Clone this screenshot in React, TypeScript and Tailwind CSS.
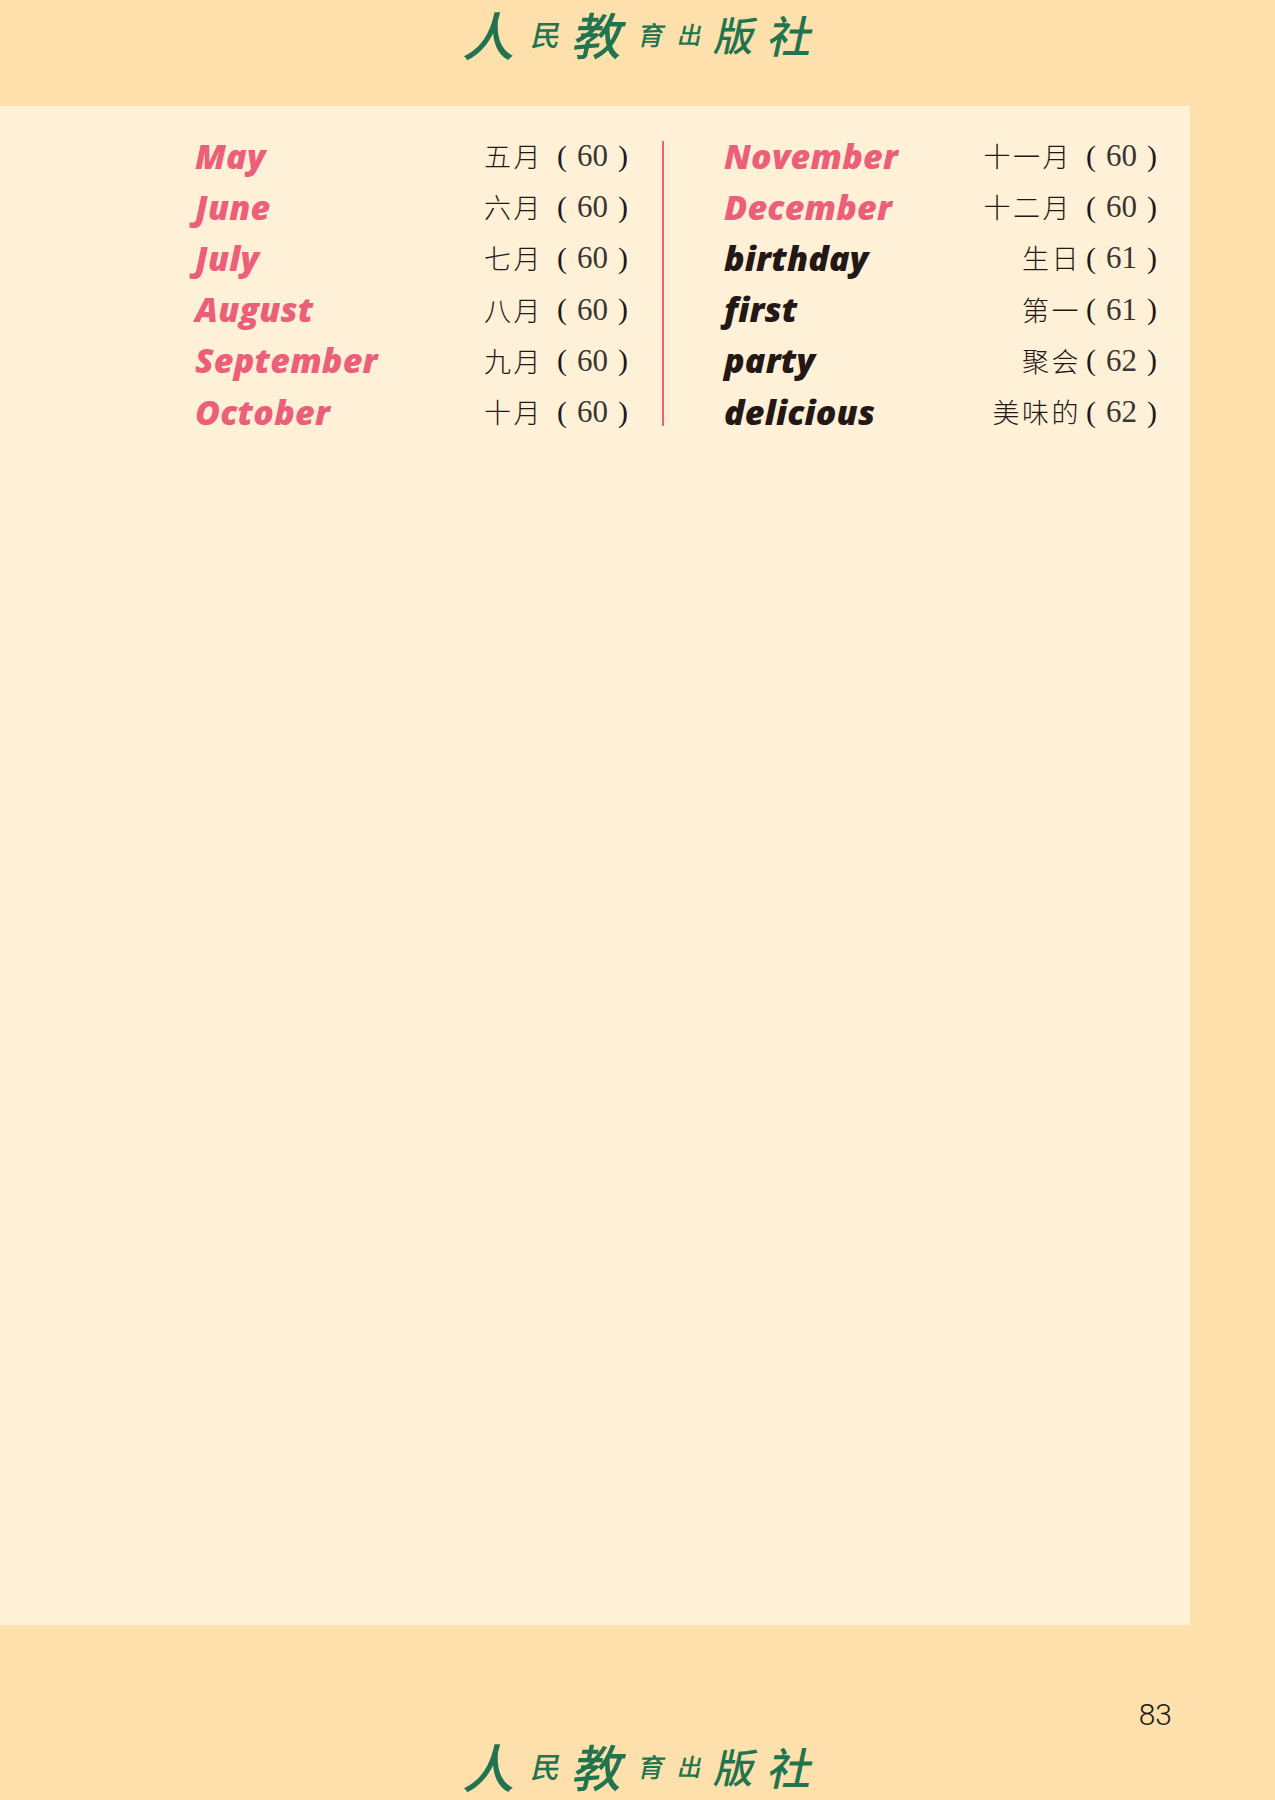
const leftRows = [
  { word: 'May', zh: '五月', num: '60' },
  { word: 'June', zh: '六月', num: '60' },
  { word: 'July', zh: '七月', num: '60' },
  { word: 'August', zh: '八月', num: '60' },
  { word: 'September', zh: '九月', num: '60' },
  { word: 'October', zh: '十月', num: '60' },
];

const rightRows = [
  { word: 'November', zh: '十一月', num: '60', pink: true, wide: true },
  { word: 'December', zh: '十二月', num: '60', pink: true, wide: true },
  { word: 'birthday', zh: '生日', num: '61' },
  { word: 'first', zh: '第一', num: '61' },
  { word: 'party', zh: '聚会', num: '62' },
  { word: 'delicious', zh: '美味的', num: '62' },
];

type Row = { word: string; zh: string; num: string; pink?: boolean; wide?: boolean };

function VocabRow({ row, pink, wide }: { row: Row; pink: boolean; wide: boolean }) {
  return (
    <div className="flex h-[51.2px] items-center justify-between">
      <span
        className={`font-['Open_Sans',sans-serif] text-[34px] font-extrabold italic leading-none tracking-[0.2px] ${
          pink ? 'text-[#ec5f78]' : 'text-[#231815]'
        }`}
      >
        {row.word}
      </span>
      <span className="flex items-center text-[#231815]">
        <span className="font-['Noto_Sans_CJK_SC',sans-serif] text-[27px] font-light leading-none tracking-[2.5px]">{row.zh}</span>
        <span className={`font-['Liberation_Serif',serif] text-[30px] font-light leading-none ${wide ? 'ml-[14px]' : 'ml-[5px]'}`}>(</span>
        <span className="ml-[10px] font-['Liberation_Serif',serif] text-[31px] leading-none text-[#3a3532]">{row.num}</span>
        <span className="ml-[10px] font-['Liberation_Serif',serif] text-[30px] font-light leading-none">)</span>
      </span>
    </div>
  );
}

function Logo() {
  return (
    <div className="flex w-[347px] -skew-x-12 items-center justify-between font-['Noto_Sans_CJK_SC',sans-serif] font-medium leading-[1.15] text-[#21744f]">
      <span className="text-[52px]">人</span>
      <span className="text-[29px]">民</span>
      <span className="text-[50px]">教</span>
      <span className="text-[26px]">育</span>
      <span className="text-[24px]">出</span>
      <span className="text-[40px]">版</span>
      <span className="text-[44px]">社</span>
    </div>
  );
}

export default function App() {
  return (
    <div className="flex h-[1800px] w-[1275px] flex-col overflow-hidden bg-[#fde0ab]">
      <header className="flex h-[106px] shrink-0 items-start justify-center pl-[5px] pt-[4px]">
        <Logo />
      </header>

      <main className="flex h-[1519px] w-[1190px] shrink-0 items-start bg-[#fff1d8] pl-[195px]">
        <div className="mt-[24px] flex w-[962px]">
          <div className="w-[433px]">
            {leftRows.map((row) => (
              <VocabRow key={row.word} row={row} pink wide />
            ))}
          </div>
          <div className="ml-[34px] mt-[11px] h-[285px] w-[2px] bg-[#ec5f78]" />
          <div className="ml-[60px] w-[433px]">
            {rightRows.map((row) => (
              <VocabRow key={row.word} row={row} pink={!!row.pink} wide={!!row.wide} />
            ))}
          </div>
        </div>
      </main>

      <footer className="flex flex-1 flex-col">
        <div className="flex justify-end pr-[103px] pt-[75px]">
          <span className="font-['Roboto',sans-serif] text-[30px] font-light leading-none text-[#231815]">83</span>
        </div>
        <div className="flex justify-center pl-[5px] pt-[6px]">
          <Logo />
        </div>
      </footer>
    </div>
  );
}
